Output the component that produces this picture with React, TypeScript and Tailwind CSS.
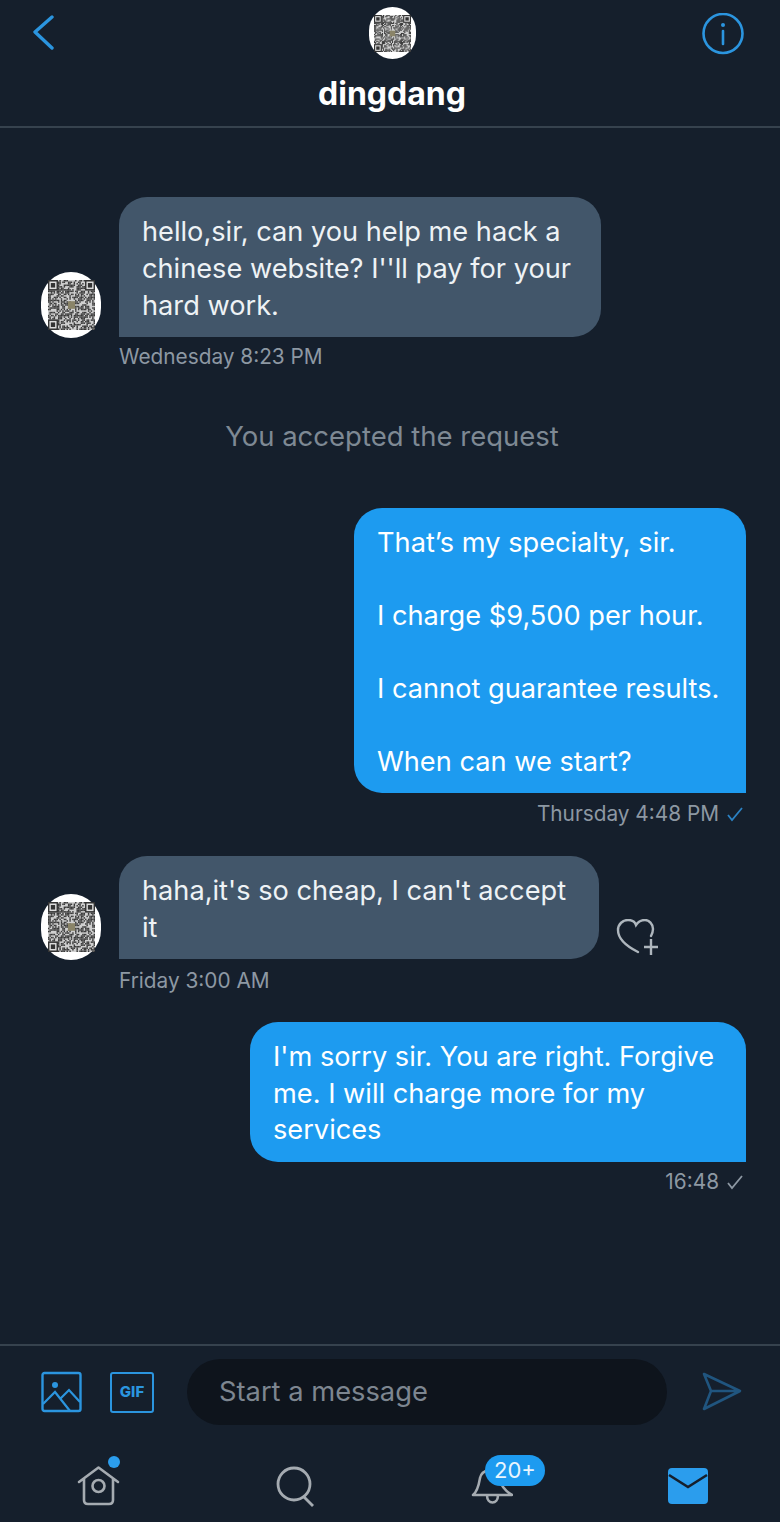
// qr code avatar, cells come from a small seeded generator so it stays stable
function Qr({ w, h }: { w: number; h: number }) {
  const n = 33;
  const cells: [number, number][] = [];
  let seed = 7;
  for (let y = 0; y < n; y++) {
    for (let x = 0; x < n; x++) {
      seed = (seed * 1103515245 + 12345) & 0x7fffffff;
      const corner = (x < 7 && y < 7) || (x > n - 8 && y < 7) || (x < 7 && y > n - 8);
      if (!corner && (seed >> 16) % 100 < 55) cells.push([x, y]);
    }
  }
  const finder = (x: number, y: number) => (
    <g key={`${x}-${y}`}>
      <rect x={x} y={y} width="7" height="7" fill="#333" />
      <rect x={x + 1} y={y + 1} width="5" height="5" fill="#ddd" />
      <rect x={x + 2} y={y + 2} width="3" height="3" fill="#333" />
    </g>
  );
  return (
    <svg width={w} height={h} viewBox={`0 0 ${n} ${n}`} preserveAspectRatio="none" className="blur-[0.7px]">
      <rect width={n} height={n} fill="#cfcfcf" />
      {cells.map(([x, y]) => (
        <rect key={`${x}:${y}`} x={x} y={y} width="1" height="1" fill="#3a3a3a" />
      ))}
      {finder(0, 0)}
      {finder(n - 7, 0)}
      {finder(0, n - 7)}
      <rect x="14" y="14" width="5" height="5" fill="#8a8468" />
    </svg>
  );
}

function Avatar() {
  return (
    <div className="w-[60px] h-[66px] -mb-[1px] rounded-full bg-white flex items-center justify-center shrink-0">
      <Qr w={47} h={50} />
    </div>
  );
}

function Incoming({ lines, width }: { lines: string[]; width: string }) {
  return (
    <div className={`bg-[#42566a] rounded-[28px] rounded-bl-none px-[23px] pt-[17px] pb-[13px] text-[27.2px] leading-[36.8px] text-[#eef2f5] ${width}`}>
      {lines.map((l) => (
        <div key={l} className="whitespace-nowrap">{l}</div>
      ))}
    </div>
  );
}

function Outgoing({ lines, width }: { lines: string[]; width: string }) {
  return (
    <div className={`bg-[#1d9bf0] rounded-[28px] rounded-br-none px-[23px] pt-[17px] pb-[13px] text-[27.2px] leading-[36.5px] text-white ${width}`}>
      {lines.map((l, i) => (
        <div key={i} className="whitespace-nowrap h-[36.5px]">{l}</div>
      ))}
    </div>
  );
}

export default function App() {
  return (
    <div className="w-[780px] h-[1522px] bg-[#151f2c] flex flex-col overflow-hidden font-['Inter',sans-serif]">
      <header className="h-[128px] shrink-0 border-b-2 border-[#36424e] grid grid-cols-[1fr_auto_1fr] pl-[36px] pr-[32px]">
        <svg width="22" height="36" viewBox="0 0 22 36" fill="none" className="mt-[15px] -ml-[4px]">
          <path d="M20 2 L3 17 L20 33" stroke="#2b95df" strokeWidth="3.4" strokeLinecap="round" strokeLinejoin="round" />
        </svg>
        <div className="flex flex-col items-center mt-[7px]">
          <div className="w-[47px] h-[52px] rounded-full bg-white flex items-center justify-center">
            <Qr w={37} h={37} />
          </div>
          <div className="mt-[15px] text-[32px] leading-[40px] font-bold text-white">dingdang</div>
        </div>
        <svg width="42" height="42" viewBox="0 0 42 42" fill="none" className="mt-[13px] mr-[4px] justify-self-end">
          <circle cx="21" cy="20.5" r="19.5" stroke="#2b95df" strokeWidth="2.6" />
          <circle cx="21" cy="12" r="2" fill="#2b95df" />
          <path d="M21 18v13" stroke="#2b95df" strokeWidth="2.6" strokeLinecap="round" />
        </svg>
      </header>

      <main className="flex-1 flex flex-col">
        <div className="pl-[41px] mt-[69px] flex items-end gap-[18px]">
          <Avatar />
          <Incoming
            width="w-[482px]"
            lines={["hello,sir, can you help me hack a", "chinese website? I''ll pay for your", "hard work."]}
          />
        </div>
        <div className="pl-[119px] mt-[7px] text-[20.8px] leading-[26px] text-[#8d98a3]">Wednesday 8:23 PM</div>

        <div className="mt-[47.5px] pl-[4px] text-center text-[27.5px] leading-[36px] text-[#7e8994]">You accepted the request</div>

        <div className="mt-[54px] pr-[34px] flex justify-end">
          <Outgoing
            width="w-[392px]"
            lines={["That’s my specialty, sir.", "", "I charge $9,500 per hour.", "", "I cannot guarantee results.", "", "When can we start?"]}
          />
        </div>
        <div className="pr-[36px] mt-[7.5px] flex justify-end items-center gap-[7px] text-[20.8px] leading-[26px] text-[#8d98a3]">
          Thursday 4:48 PM
          <svg width="18" height="16" viewBox="0 0 18 16" fill="none">
            <path d="M2 9l4 5L16 2" stroke="#2b82c4" strokeWidth="1.8" />
          </svg>
        </div>

        <div className="pl-[41px] mt-[29px] flex items-end gap-[18px]">
          <Avatar />
          <Incoming width="w-[480px]" lines={["haha,it's so cheap, I can't accept", "it"]} />
          <svg width="44" height="40" viewBox="0 0 44 40" fill="none" className="-ml-[1px]">
            <path d="M22 33 C14 29 2 21 2 11 C2 5 7 1 12 1 C16 1 19 3 20 6 C22 3 25 1 29 1 C33 1 37 5 37 10 C37 13 36 15 35 17" stroke="#aeb6bd" strokeWidth="2.4" strokeLinecap="round" />
            <path d="M35 20v16M28 28h14" stroke="#aeb6bd" strokeWidth="2.4" />
          </svg>
        </div>
        <div className="pl-[119px] mt-[8.5px] text-[20.8px] leading-[26px] text-[#8d98a3]">Friday 3:00 AM</div>

        <div className="mt-[28.5px] pr-[34px] flex justify-end">
          <Outgoing
            width="w-[496px]"
            lines={["I'm sorry sir. You are right. Forgive", "me. I will charge more for my", "services"]}
          />
        </div>
        <div className="pr-[36px] mt-[7.5px] flex justify-end items-center gap-[7px] text-[20.8px] leading-[26px] text-[#8d98a3]">
          16:48
          <svg width="18" height="16" viewBox="0 0 18 16" fill="none">
            <path d="M2 9l4 5L16 2" stroke="#8d98a3" strokeWidth="1.8" />
          </svg>
        </div>
      </main>

      <footer className="h-[178px] shrink-0 border-t-2 border-[#36424e] flex flex-col">
        <div className="mt-[13px] flex items-center pl-[41px]">
          <svg width="41" height="42" viewBox="0 0 41 42" fill="none">
            <rect x="1.5" y="2" width="38" height="38" rx="2" stroke="#2b95df" strokeWidth="2.4" />
            <circle cx="14" cy="14" r="3" fill="#2b95df" />
            <path d="M2 33 L14 21 L29 40 M20 27 L28 19 L39 31" stroke="#2b95df" strokeWidth="2.2" />
          </svg>
          <div className="ml-[28px] w-[44px] h-[41px] border-[2.4px] border-[#2b95df] rounded-[3px] flex items-center justify-center text-[15px] font-extrabold text-[#2b95df]">
            GIF
          </div>
          <div className="ml-[33px] w-[480px] h-[66px] rounded-full bg-[#0e141c] flex items-center pl-[32px] text-[27.3px] text-[#7d8690]">
            Start a message
          </div>
          <svg width="40" height="42" viewBox="0 0 40 42" fill="none" className="ml-[35px]">
            <path d="M2 3 L38 20 L2 38 L9 20 Z M9 20 H38" stroke="#20557f" strokeWidth="2.6" strokeLinejoin="round" />
          </svg>
        </div>
        <nav className="mt-[13px] flex items-start pl-[76px]">
          <svg width="48" height="72" viewBox="0 0 48 72" fill="none" className="mt-[11px] shrink-0">
            <circle cx="38" cy="13" r="6" fill="#2b9ded" />
            <path d="M3 33 L22.5 18.5 L42 33 M8 30 V51 C8 54 10 55 12 55 H33 C35 55 37 54 37 51 V30" stroke="#a5abb1" strokeWidth="2.6" strokeLinejoin="round" strokeLinecap="round" />
            <circle cx="22.5" cy="37" r="6" stroke="#a5abb1" strokeWidth="2.6" />
          </svg>
          <svg width="42" height="42" viewBox="0 0 42 42" fill="none" className="ml-[151px] mt-[28px] shrink-0">
            <circle cx="19" cy="18" r="16" stroke="#a5abb1" strokeWidth="2.8" />
            <path d="M29 31 L38 40" stroke="#a5abb1" strokeWidth="2.8" />
          </svg>
          <div className="relative ml-[152px] mt-[30px] shrink-0">
            <svg width="44" height="40" viewBox="0 0 44 40" fill="none">
              <path d="M4 27 C9 23 10 16 11 10 C12 5 15 3 20 2 C28 2 30 6 30 10 C31 16 36 23 43 27 Z M18 27 C18 37 29 37 29 27" stroke="#a5abb1" strokeWidth="2.6" strokeLinejoin="round" />
            </svg>
            <div className="absolute left-[16px] top-[-13px] w-[60px] h-[31px] rounded-full bg-[#1d9bf0] text-[#e8f5fe] text-[22px] leading-[31px] text-center">
              20+
            </div>
          </div>
          <svg width="40" height="36" viewBox="0 0 40 36" fill="none" className="ml-[155px] mt-[30px] shrink-0">
            <rect x="0" y="0" width="40" height="36" rx="4" fill="#2b9ded" />
            <path d="M1 7 L20 19 L39 7" stroke="#151f2c" strokeWidth="2.6" />
          </svg>
        </nav>
      </footer>
    </div>
  );
}
